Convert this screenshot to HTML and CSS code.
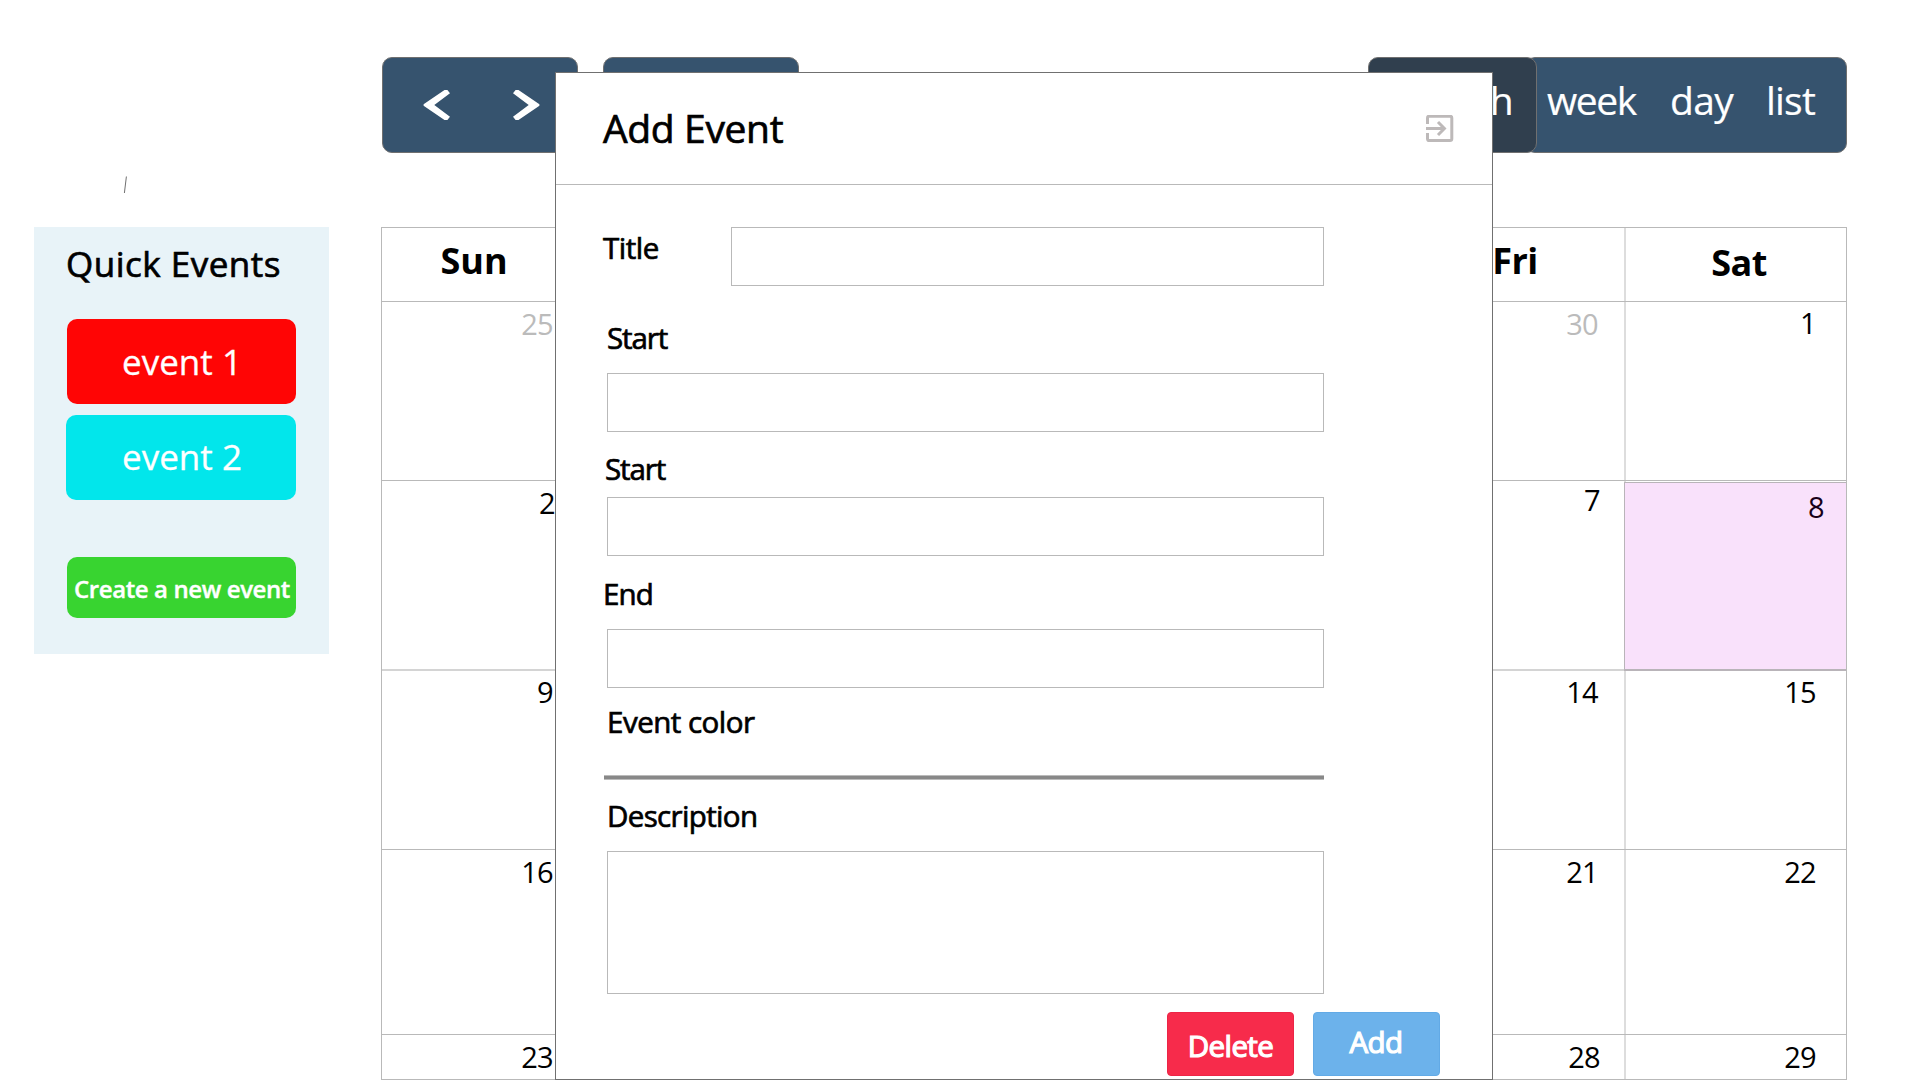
FILE: index.html
```html
<!DOCTYPE html>
<html lang="en">
<head>
<meta charset="utf-8">
<title>Calendar</title>
<link rel="stylesheet" href="styles.css">
</head>
<body>
<div class="page">
  <aside class="side">
    <svg class="tick" width="6" height="20" viewBox="0 0 6 20"><path d="M4.4 1.5L2.4 18" stroke="#707070" stroke-width="1" fill="none"/></svg>
    <section class="quick">
      <h2 class="quick-title">Quick Events</h2>
      <button class="event red">event 1</button>
      <button class="event cyan">event 2</button>
      <button class="create">Create a new event</button>
    </section>
  </aside>
  <main class="main">
    <nav class="toolbar">
      <div class="group arrows">
        <svg width="28" height="32" viewBox="0 0 28 32"><path d="M24.4 1L27 4.2L11.3 16L27 27.8L24.4 31H21.5L0.6 16.8V15.2L21.5 1Z" fill="#fff"/></svg>
        <svg width="28" height="32" viewBox="0 0 28 32"><path d="M3.6 1L1 4.2L16.7 16L1 27.8L3.6 31H6.5L27.4 16.8V15.2L6.5 1Z" fill="#fff"/></svg>
      </div>
      <div class="group"></div>
      <div class="views">
        <div class="view active">month</div>
        <div class="view-rest">
          <span class="week">week</span>
          <span class="day">day</span>
          <span class="list">list</span>
        </div>
      </div>
    </nav>
    <div class="calendar">
      <div class="row head"><div>Sun</div><div></div><div></div><div></div><div></div><div class="fri">Fri</div><div class="sat">Sat</div></div>
      <div class="row r1"><div class="muted">25</div><div></div><div></div><div></div><div></div><div class="muted">30</div><div>1</div></div>
      <div class="row r2"><div class="two">2</div><div></div><div></div><div></div><div></div><div class="seven">7</div><div class="today">8</div></div>
      <div class="row r3"><div>9</div><div></div><div></div><div></div><div></div><div>14</div><div>15</div></div>
      <div class="row r4"><div>16</div><div></div><div></div><div></div><div></div><div>21</div><div>22</div></div>
      <div class="row r5"><div>23</div><div></div><div></div><div></div><div></div><div class="late">28</div><div>29</div></div>
    </div>
  </main>
</div>

<form class="modal">
  <header class="modal-head">
    <h1>Add Event</h1>
    <svg class="exit" width="28" height="28" viewBox="0 0 28 28" fill="none" stroke="#bdb9b9" stroke-width="3"><path d="M1.5 9V3Q1.5 1.2 3.2 1.2H24Q25.8 1.2 25.8 3V23.8Q25.8 25.6 24 25.6H3.2Q1.5 25.6 1.5 23.8V18M0 13.5H18.5M12 7L18.4 13.5L12 20"/></svg>
  </header>
  <div class="fields">
    <div class="title-row"><label class="l-title">Title</label><input class="box title-box" type="text"></div>
    <label class="l-start">Start</label><input class="box" type="text">
    <label class="l-start2">Start</label><input class="box" type="text">
    <label class="l-end">End</label><input class="box" type="text">
    <label class="l-color">Event color</label>
    <div class="rule"></div>
    <label class="l-desc">Description</label><textarea class="box area"></textarea>
  </div>
  <div class="actions">
    <button type="button" class="btn delete">Delete</button>
    <button type="button" class="btn add">Add</button>
  </div>
</form>
</body>
</html>
```
FILE: styles.css
```css
* { box-sizing: border-box; margin: 0; padding: 0; }
html, body { width: 1920px; height: 1080px; overflow: hidden; background: #fff; }
body { position: relative; font-family: "Open Sans", "Noto Sans", sans-serif; color: #000; }
button { border: 0; font-family: inherit; color: #fff; display: flex; align-items: center; justify-content: center; white-space: nowrap; }
svg { display: block; }

.page { display: flex; height: 1080px; }
.side { width: 295px; margin-left: 34px; padding-top: 175px; }
.tick { margin-left: 88px; }
.quick { height: 427px; margin-top: 32px; padding: 13px 33px 0; background: #e8f3f8; }
.quick-title { height: 47px; line-height: 48px; margin-left: -1px; font-size: 35px; font-weight: 400; letter-spacing: .5px; -webkit-text-stroke: .7px #000; white-space: nowrap; }
.event { width: 229px; height: 85px; padding-left: 1px; border-radius: 10px; font-size: 35px; -webkit-text-stroke: .3px #fff; }
.red { margin-top: 32px; background: #ff0505; }
.cyan { width: 230px; margin: 11px 0 0 -1px; padding: 0 0 2px 2px; background: #02e6eb; }
.create { width: 229px; height: 61px; margin-top: 57px; padding: 1px 0 0 1px; border-radius: 10px; background: #38d430; font-size: 24px; font-weight: 600; letter-spacing: -.4px; -webkit-text-stroke: .4px #fff; }

.main { width: 1466px; margin-left: 52px; }
.toolbar { display: flex; height: 227px; padding: 57px 0 74px 1px; }
.group { width: 196px; height: 96px; margin-right: 25px; background: #36536e; border: 1px solid #707070; border-radius: 10px; }
.arrows { display: flex; gap: 61px; padding: 31px 0 0 40px; }
.views { display: flex; margin-left: 544px; color: #fff; font-size: 39px; line-height: 84px; -webkit-text-stroke: .2px #fff; }
.view { z-index: 1; width: 169px; height: 96px; padding-right: 23px; text-align: right; background: #303f4e; border: 1px solid #707070; border-radius: 10px; letter-spacing: -.8px; }
.view-rest { display: flex; width: 322px; height: 96px; margin-left: -12px; padding-left: 21px; background: #36536e; border: 1px solid #707070; border-radius: 10px; }
.week { width: 123px; letter-spacing: -1.4px; }
.day { width: 96px; letter-spacing: -.6px; }
.list { letter-spacing: -.8px; }

.calendar { height: 853px; border: 1px solid #b9b9b9; }
.row { display: grid; grid-template-columns: 184px repeat(4, 210px) 221px 219px; border-bottom: 1px solid #b9b9b9; font-size: 29px; line-height: 40px; letter-spacing: -.7px; text-align: right; }
.row > div { border-right: 2px solid #ddd; padding: 2px 11px 0 0; }
.row > div:nth-child(6) { margin-right: 1px; padding-right: 26px; }
.row > div:last-child { border-right: 0; padding-right: 30px; }
.row .muted { color: #bbb; }
.row.head { height: 74px; font-size: 36px; font-weight: 700; line-height: 66px; letter-spacing: 0; text-align: center; }
.row.head > div { padding: 0 0 0 2px; }
.row.head .fri { padding: 0; letter-spacing: -.5px; }
.row.head .sat { padding: 2px 0 0 5px; letter-spacing: -.5px; }
.r1 { height: 179px; }
.r2 { height: 190px; border-bottom: 2px solid #d4d4d4; }
.r3 { height: 179px; }
.r4 { height: 185px; }
.r5 { height: 44px; border-bottom: 0; }
.row.r1 > div:last-child { padding-top: 1px; padding-right: 30px; }
.row.r2 > .two { padding-right: 9px; }
.row.r2 > .seven { padding-top: 0; padding-right: 24px; line-height: 38px; }
.row.r2 > .today { margin: 1px 0 -2px -3px; padding: 4px 22px 0 0; background: #f9e1fb; border: solid #b9b4b9; border-width: 1px 0 2px 1px; color: #180018; }
.row.r3 > div { padding-top: 1px; }
.row.r5 > .late { padding-right: 24px; }

.modal { position: absolute; z-index: 2; left: 555px; top: 72px; width: 938px; height: 1008px; background: #fff; border: 1px solid #707070; }
.modal-head { display: flex; justify-content: space-between; height: 112px; padding: 0 38px 0 47px; border-bottom: 1px solid #b9b9b9; }
.modal-head h1 { height: 111px; line-height: 110px; font-size: 39px; font-weight: 400; letter-spacing: -.35px; -webkit-text-stroke: .7px #000; }
.exit { margin-top: 42px; }
.fields { display: flex; flex-direction: column; padding: 42px 168px 0 51px; }
.title-row { display: flex; }
label { height: 40px; line-height: 40px; font-size: 29.5px; letter-spacing: -.7px; -webkit-text-stroke: .7px #000; white-space: nowrap; }
.box { display: block; width: 717px; height: 59px; background: #fff; border: 1px solid #b9b9b9; border-radius: 0; resize: none; outline: 0; }
.title-box { width: 593px; margin-left: auto; }
.l-title { margin: 1px 0 0 -4px; letter-spacing: -.5px; }
.l-start { margin: 32px 0 15px 0; letter-spacing: -1.1px; }
.l-start2 { margin: 17px 0 8px -2px; letter-spacing: -1.1px; }
.l-end { margin: 18px 0 15px -4px; letter-spacing: -.9px; }
.l-color { margin: 14px 0 33px 0; letter-spacing: -.5px; }
.rule { height: 5px; margin-left: -3px; background: #888; border: solid #bbb; border-width: 1px 0; }
.l-desc { margin: 16px 0 15px 0; letter-spacing: -.65px; }
.area { height: 143px; }
.actions { display: flex; gap: 19px; margin: 18px 0 0 611px; }
.btn { width: 127px; height: 64px; border-radius: 4px; font-size: 29.5px; letter-spacing: -.6px; -webkit-text-stroke: 1.2px #fff; }
.delete { padding-top: 2px; background: #f72b4b; border: 1px solid #ec2546; }
.add { padding: 0 1px 6px 0; background: #6cb2eb; border: 1px solid #62aae6; }
```
